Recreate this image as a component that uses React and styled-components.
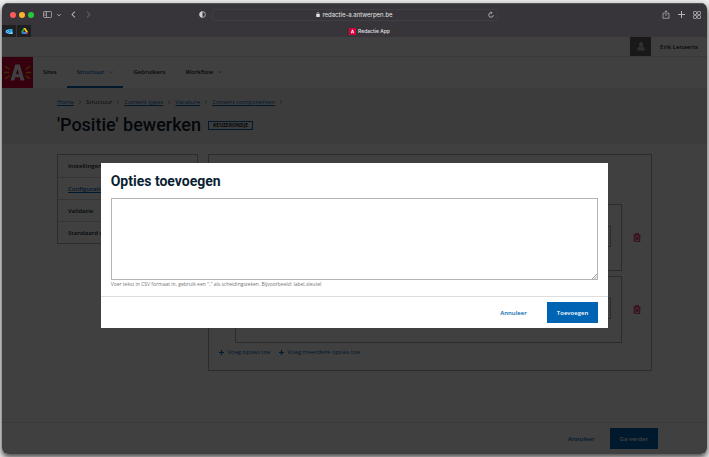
import React from "react";
import styled, { createGlobalStyle, css } from "styled-components";

const GlobalStyle = createGlobalStyle`
  *, *::before, *::after { box-sizing: border-box; }
  body {
    margin: 0;
    background: #ececec;
    font-family: "Open Sans", "Noto Sans", sans-serif;
    font-size: 6px;
    line-height: 8px;
    color: #0b1f33;
  }
  button, input, textarea { font: inherit; }
  h1, h2, p, ol, ul { margin: 0; padding: 0; }
  ol, ul { list-style: none; }
`;

const BLUE = "#0064b4";

const Desktop = styled.div`
  display: flex;
  min-height: 100vh;
  padding: 3px 2px;
`;

const Window = styled.div`
  flex: 1;
  display: flex;
  flex-direction: column;
  min-width: 0;
  border-radius: 6px;
  overflow: hidden;
  background: #fff;
  box-shadow: 0 3px 6px rgba(0, 0, 0, 0.75);
`;

const Chrome = styled.header`
  background: #37353a;
  color: #e4e3e5;
  font-family: Inter, sans-serif;
  border-top: 1px solid #55545a;
`;

const Toolbar = styled.div`
  display: grid;
  grid-template-columns: 1fr 286px 1fr;
  align-items: center;
  height: 21px;
`;

const ToolGroup = styled.div`
  display: flex;
  align-items: center;
  gap: ${(p) => p.$gap}px;
  padding: ${(p) => p.$pad || "0"};
  justify-content: ${(p) => (p.$end ? "flex-end" : "flex-start")};
`;

const Dot = styled.span`
  width: 6px;
  height: 6px;
  border-radius: 50%;
  background: ${(p) => p.$color};
`;

const IconButton = styled.button`
  display: flex;
  padding: 0;
  border: 0;
  background: none;
  color: ${(p) => p.$color || "#b4b3b6"};
`;

const PrivacyButton = styled(IconButton)`
  margin-left: auto;
`;

const Address = styled.div`
  display: grid;
  grid-template-columns: 1fr auto 1fr;
  align-items: center;
  height: 12px;
  padding: 0 3px;
  border: 1px solid #403e43;
  border-radius: 3px;
`;

const AddressText = styled.span`
  grid-column: 2;
  display: flex;
  align-items: center;
  gap: 2px;
`;

const AddressEnd = styled.span`
  justify-self: end;
`;

const Tabs = styled.div`
  display: flex;
  height: 12px;
`;

const PinnedTab = styled.button`
  display: flex;
  align-items: center;
  justify-content: center;
  width: 15px;
  padding: 0;
  border: 0;
  border-right: 1px solid #37353a;
  background: #1f1e21;
`;

const ActiveTab = styled.div`
  flex: 1;
  display: flex;
  align-items: center;
  justify-content: center;
  gap: 2px;
  font-size: 5px;
  font-weight: 500;
`;

const Viewport = styled.div`
  position: relative;
  flex: 1;
  display: flex;
  flex-direction: column;
`;

const UserBar = styled.div`
  display: flex;
  justify-content: flex-end;
  height: 20px;
  border-bottom: 1px solid #e2e2e2;
`;

const Avatar = styled.span`
  display: flex;
  align-items: center;
  justify-content: center;
  width: 21px;
  background: #666;
  color: #c4c4c4;
`;

const UserName = styled.span`
  align-self: center;
  padding: 0 9px 0 9px;
  font-weight: 600;
`;

const NavBar = styled.nav`
  display: flex;
  height: 31px;
`;

const NavLink = styled.a`
  display: flex;
  align-items: center;
  gap: 5px;
  padding: 0 10px;
  font-weight: 600;
  text-decoration: none;
  color: ${(p) => (p.$active ? BLUE : "inherit")};
  border-bottom: 2px solid ${(p) => (p.$active ? BLUE : "transparent")};
`;

const PageHeader = styled.div`
  display: flex;
  flex-direction: column;
  gap: 4px;
  padding: 10px 55px 4px;
  background: #efefef;
`;

const Crumbs = styled.ol`
  display: flex;
  align-items: center;
  gap: 4px;
`;

const Crumb = styled.li`
  display: flex;
  align-items: center;
  gap: 4px;
  a { color: ${BLUE}; }
`;

const TitleRow = styled.div`
  display: flex;
  align-items: center;
  gap: 7px;
`;

const Title = styled.h1`
  font-family: Roboto, sans-serif;
  font-size: 18px;
  line-height: 30px;
  font-weight: 500;
`;

const Badge = styled.span`
  padding: 0 4px;
  border: 1px solid ${BLUE};
  font-size: 5px;
  font-weight: 700;
  line-height: 7px;
`;

const Content = styled.main`
  flex: 1;
  display: grid;
  grid-template-columns: repeat(12, 1fr);
  align-items: start;
  gap: 10px;
  padding: 10px 55px;
`;

const SideNav = styled.nav`
  grid-column: span 3;
  border: 1px solid #b0b0b0;
`;

const SideLink = styled.a`
  display: block;
  padding: 7px 10px;
  font-weight: 600;
  text-decoration: ${(p) => (p.$active ? "underline" : "none")};
  color: ${(p) => (p.$active ? BLUE : "inherit")};
  & + & {
    padding-bottom: 6px;
    border-top: 1px solid #d4d4d4;
  }
`;

const Panel = styled.section`
  grid-column: span 9;
  display: flex;
  flex-direction: column;
  gap: 5px;
  padding: 49px 0 14px 26px;
  border: 1px solid #b0b0b0;
`;

const OptionRow = styled.div`
  display: grid;
  grid-template-columns: 1fr 29px;
  align-items: center;
`;

const OptionCard = styled.div`
  padding: 21px 10px 23px;
  border: 1px solid #b0b0b0;
`;

const OptionInput = styled.input`
  display: block;
  width: 100%;
  height: 21px;
  border: 1px solid #b0b0b0;
  background: #fff;
`;

const TrashButton = styled(IconButton)`
  justify-self: center;
`;

const Actions = styled.div`
  display: flex;
  gap: 9px;
  margin-left: -16px;
`;

const TextButton = styled.button`
  display: flex;
  align-items: center;
  gap: 3px;
  padding: 0;
  border: 0;
  background: none;
  color: ${BLUE};
`;

const buttonTone = {
  primary: css`
    background: ${BLUE};
    color: #fff;
  `,
  plain: css`
    background: none;
    color: ${BLUE};
  `,
};

const Button = styled.button`
  height: 21px;
  padding: 0 10px;
  border: 0;
  font-weight: 600;
  ${(p) => buttonTone[p.$tone]}
`;

const PageFooter = styled.footer`
  display: flex;
  justify-content: flex-end;
  gap: 5px;
  padding: 5px 49px;
  border-top: 1px solid #e6e6e6;
`;

const Overlay = styled.div`
  position: absolute;
  inset: 0;
  display: flex;
  align-items: center;
  justify-content: center;
  background: rgba(0, 0, 0, 0.75);
`;

const Dialog = styled.div`
  width: 72%;
  background: #fff;
`;

const DialogBody = styled.div`
  display: flex;
  flex-direction: column;
  padding: 8px 10px;
`;

const DialogTitle = styled.h2`
  margin-bottom: 7px;
  font-family: Roboto, sans-serif;
  font-size: 14px;
  line-height: 20px;
  font-weight: 700;
`;

const TextArea = styled.textarea`
  display: block;
  width: 100%;
  height: 82px;
  padding: 4px;
  border: 1px solid #b4b4b4;
  border-radius: 0;
  background: #fff;
  resize: none;
`;

const TextAreaWrap = styled.div`
  position: relative;
`;

const Grip = styled.svg`
  position: absolute;
  right: 1px;
  bottom: 1px;
`;

const Hint = styled.p`
  font-size: 5px;
  color: #757575;
`;

const DialogFooter = styled.div`
  display: flex;
  justify-content: flex-end;
  gap: 10px;
  padding: 5px 10px;
  border-top: 1px solid #dedede;
`;

function Chevron({ dir = "right", size = 4, width = 1.2 }) {
  const d = { right: "M3 1l4 4-4 4", left: "M7 1L3 5l4 4", down: "M1 3l4 4 4-4" }[dir];
  return (
    <svg width={size} height={size} viewBox="0 0 10 10" fill="none" stroke="currentColor" strokeWidth={width} aria-hidden="true">
      <path d={d} />
    </svg>
  );
}

function Logo({ size, rays }) {
  return (
    <svg width={size} height={size} viewBox="0 0 31 31" aria-label="Antwerpen" role="img">
      <rect width="31" height="31" fill="#d8003c" />
      {rays && (
        <g stroke="#e8b400" strokeWidth="1.5" strokeLinecap="round">
          <path d="M2.500 15.500h4M3.500 9.500l3.500 2.500M3.500 21.500l3.500-2.500M28.500 15.500h-4M27.500 9.500l-3.500 2.500M27.500 21.500l-3.500-2.500" />
        </g>
      )}
      <path
        fill="#fff"
        fillRule="evenodd"
        d="M13.300 7.500h4.400L22.500 23.500h-3.900l-.9-3.300h-4.500l-.9 3.300H8.500zM15.500 12l-1.500 5.300h3z"
      />
    </svg>
  );
}

function Trash() {
  return (
    <svg width="8" height="9" viewBox="0 0 16 18" fill="none" stroke="currentColor" strokeWidth="1.8" aria-hidden="true">
      <path d="M1 4h14M5 4V1.500h6V4M2.500 4v12.500h11V4M6 7v7M10 7v7M8 7v7" />
    </svg>
  );
}

function Plus({ size = 5, width = 2.4 }) {
  return (
    <svg width={size} height={size} viewBox="0 0 10 10" stroke="currentColor" strokeWidth={width} aria-hidden="true">
      <path d="M5 0v10M0 5h10" />
    </svg>
  );
}

function BrowserChrome() {
  return (
    <Chrome>
      <Toolbar>
        <ToolGroup $gap={3} $pad="0 6px 0 8px">
          <Dot $color="#fc5b57" />
          <Dot $color="#fdb32c" />
          <Dot $color="#27c840" />
          <ToolGroup $gap={5} $pad="0 0 0 6px">
            <IconButton aria-label="Navigatiekolom">
              <svg width="9" height="7" viewBox="0 0 18 14" fill="none" stroke="currentColor" strokeWidth="1.500">
                <rect x="1" y="1" width="16" height="12" rx="1.500" />
                <path d="M7 1v12M3 4h2M3 6.500h2M3 9h2" />
              </svg>
            </IconButton>
            <IconButton aria-label="Tabgroepen">
              <Chevron dir="down" size={4} width={2.5} />
            </IconButton>
          </ToolGroup>
          <ToolGroup $gap={8} $pad="0 0 0 6px">
            <IconButton aria-label="Vorige">
              <Chevron dir="left" size={7} width={1.5} />
            </IconButton>
            <IconButton aria-label="Volgende" $color="#626165">
              <Chevron size={7} width={1.5} />
            </IconButton>
          </ToolGroup>
          <PrivacyButton aria-label="Privacyrapport" $color="#cfced1">
            <svg width="7" height="7" viewBox="0 0 14 14">
              <circle cx="7" cy="7" r="5.800" fill="none" stroke="currentColor" strokeWidth="1.500" />
              <path d="M7 1a6 6 0 0 0 0 12z" fill="currentColor" />
            </svg>
          </PrivacyButton>
        </ToolGroup>
        <Address>
          <AddressText>
            <svg width="4" height="5" viewBox="0 0 8 10" aria-hidden="true">
              <rect x="0.500" y="4" width="7" height="6" rx="1" fill="currentColor" />
              <path d="M2 4.500V3a2 2 0 0 1 4 0v1.500" fill="none" stroke="currentColor" strokeWidth="1.200" />
            </svg>
            redactie-a.antwerpen.be
          </AddressText>
          <AddressEnd>
            <IconButton aria-label="Herlaad" $color="#cfced1">
              <svg width="6" height="7" viewBox="0 0 12 14" fill="none" stroke="currentColor" strokeWidth="1.500">
                <path d="M10.500 8a4.500 4.500 0 1 1-4.500-4.500h1.500M5.500 1l2.500 2.500L5.500 6" />
              </svg>
            </IconButton>
          </AddressEnd>
        </Address>
        <ToolGroup $gap={8} $pad="0 6px 0 0" $end>
          <IconButton aria-label="Deel">
            <svg width="8" height="9" viewBox="0 0 16 18" fill="none" stroke="currentColor" strokeWidth="1.500">
              <path d="M5.500 6.500H2v10h12v-10h-3.500M8 12V1.500M5 4.500l3-3 3 3" />
            </svg>
          </IconButton>
          <IconButton aria-label="Nieuw tabblad">
            <Plus size={7} width={1.5} />
          </IconButton>
          <IconButton aria-label="Taboverzicht">
            <svg width="8" height="8" viewBox="0 0 16 16" fill="none" stroke="currentColor" strokeWidth="1.500">
              <rect x="1" y="1" width="6" height="6" rx="1" />
              <rect x="9" y="1" width="6" height="6" rx="1" />
              <rect x="1" y="9" width="6" height="6" rx="1" />
              <rect x="9" y="9" width="6" height="6" rx="1" />
            </svg>
          </IconButton>
        </ToolGroup>
      </Toolbar>
      <Tabs>
        <PinnedTab aria-label="Outlook">
          <svg width="8" height="7" viewBox="0 0 16 14">
            <rect x="6" y="2" width="9" height="10" fill="#28a8ea" />
            <path d="M6 7l4.500 3L15 7v5H6z" fill="#8fd3f7" />
            <rect x="1" y="3" width="8" height="8" rx="1" fill="#0f6cbd" />
            <circle cx="5" cy="7" r="2" fill="none" stroke="#fff" strokeWidth="1.300" />
          </svg>
        </PinnedTab>
        <PinnedTab aria-label="Drive">
          <svg width="7" height="6" viewBox="0 0 14 12">
            <path d="M5 0h4L4.500 8 2.300 12 0 8z" fill="#2ba24c" />
            <path d="M5 0h4l5 8H9.500z" fill="#fbc116" />
            <path d="M4.500 8H14l-2.300 4H2.300z" fill="#3f7fee" />
            <path d="M9.500 8H14l-2.300 4z" fill="#ea4335" />
          </svg>
        </PinnedTab>
        <ActiveTab>
          <Logo size={7} />
          Redactie App
        </ActiveTab>
      </Tabs>
    </Chrome>
  );
}

const crumbs = [
  ["Home", true],
  ["Structuur", false],
  ["Content types", true],
  ["Vacature", true],
  ["Content componenten", true],
];

export default function App() {
  return (
    <>
      <GlobalStyle />
      <Desktop>
        <Window>
          <BrowserChrome />
          <Viewport>
            <UserBar>
              <Avatar>
                <svg width="8" height="9" viewBox="0 0 16 18" fill="currentColor" aria-hidden="true">
                  <ellipse cx="8" cy="5" rx="4" ry="5" />
                  <path d="M1 17v-4c0-2 2-3.500 4-3.500 2 1.500 4 1.500 6 0 2 0 4 1.500 4 3.500v4z" />
                </svg>
              </Avatar>
              <UserName>Erik Lenaerts</UserName>
            </UserBar>
            <NavBar>
              <Logo size={31} rays />
              <NavLink href="#sites">Sites</NavLink>
              <NavLink href="#structuur" $active>
                Structuur <Chevron dir="down" />
              </NavLink>
              <NavLink href="#gebruikers">Gebruikers</NavLink>
              <NavLink href="#workflow">
                Workflow <Chevron dir="down" />
              </NavLink>
            </NavBar>
            <PageHeader>
              <Crumbs>
                {crumbs.map(([label, linked]) => (
                  <Crumb key={label}>
                    {linked ? <a href="#crumb">{label}</a> : <span>{label}</span>}
                    <Chevron />
                  </Crumb>
                ))}
              </Crumbs>
              <TitleRow>
                <Title>'Positie' bewerken</Title>
                <Badge>KEUZERONDJE</Badge>
              </TitleRow>
            </PageHeader>
            <Content>
              <SideNav>
                <SideLink href="#instellingen">Instellingen</SideLink>
                <SideLink href="#configuratie" $active>Configuratie</SideLink>
                <SideLink href="#validatie">Validatie</SideLink>
                <SideLink href="#standaard">Standaard waarde</SideLink>
              </SideNav>
              <Panel>
                {[1, 2].map((n) => (
                  <OptionRow key={n}>
                    <OptionCard>
                      <OptionInput aria-label={`Optie ${n}`} />
                    </OptionCard>
                    <TrashButton aria-label={`Verwijder optie ${n}`} $color="#d8003c">
                      <Trash />
                    </TrashButton>
                  </OptionRow>
                ))}
                <Actions>
                  <TextButton><Plus /> Voeg opties toe</TextButton>
                  <TextButton><Plus /> Voeg meerdere opties toe</TextButton>
                </Actions>
              </Panel>
            </Content>
            <PageFooter>
              <Button $tone="plain">Annuleer</Button>
              <Button $tone="primary">Ga verder</Button>
            </PageFooter>
            <Overlay>
              <Dialog role="dialog" aria-modal="true" aria-labelledby="dialog-title">
                <DialogBody>
                  <DialogTitle id="dialog-title">Opties toevoegen</DialogTitle>
                  <TextAreaWrap>
                    <TextArea aria-labelledby="dialog-title" aria-describedby="dialog-hint" />
                    <Grip width="5" height="5" viewBox="0 0 5 5" stroke="#999" strokeWidth="1" aria-hidden="true">
                      <path d="M0 5l5-5M2.500 5L5 2.500" />
                    </Grip>
                  </TextAreaWrap>
                  <Hint id="dialog-hint">
                    Voer tekst in CSV formaat in, gebruik een "," als scheidingsteken. Bijvoorbeeld: label,sleutel
                  </Hint>
                </DialogBody>
                <DialogFooter>
                  <Button $tone="plain">Annuleer</Button>
                  <Button $tone="primary">Toevoegen</Button>
                </DialogFooter>
              </Dialog>
            </Overlay>
          </Viewport>
        </Window>
      </Desktop>
    </>
  );
}
